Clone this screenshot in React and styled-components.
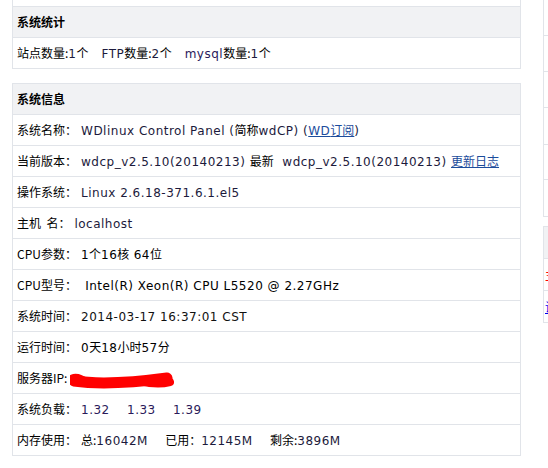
import React from 'react';
import styled, { createGlobalStyle } from 'styled-components';

const GlobalStyle = createGlobalStyle`
  html, body {
    margin: 0;
    padding: 0;
    background: #fff;
    overflow: hidden;
  }
  body {
    font-family: "DejaVu Sans", "Noto Sans CJK SC", sans-serif;
    font-size: 12px;
    color: #000;
  }
`;

const Page = styled.div`
  display: flex;
  align-items: flex-start;
  gap: 22px;
  padding-left: 12px;
  width: 800px;
`;

const Main = styled.div`
  flex: 0 0 509px;
  display: flex;
  flex-direction: column;
  gap: 14px;
`;

const Side = styled.div`
  flex: 0 0 200px;
  display: flex;
  flex-direction: column;
  gap: 9px;
`;

const Table = styled.div`
  border: 1px solid #e1e4e9;
  border-top: ${p => (p.cut ? 'none' : '1px solid #e1e4e9')};
  background: #fff;
  display: flex;
  flex-direction: column;
`;

const Stub = styled.div`
  height: ${p => p.h}px;
  border-bottom: 1px solid #e1e4e9;
`;

const Head = styled.div`
  height: ${p => p.h || 30}px;
  line-height: ${p => p.h || 30}px;
  padding-left: 4px;
  background: #f1f2f4;
  border-bottom: 1px solid #e1e4e9;
  font-family: "Noto Sans CJK SC", "DejaVu Sans", sans-serif;
  font-weight: bold;
  font-size: 12px;
`;

const Row = styled.div`
  height: ${p => p.h || 30}px;
  line-height: ${p => p.h || 30}px;
  padding-left: ${p => p.pad ?? 4}px;
  white-space: pre;
  overflow: hidden;
  border-bottom: 1px solid #e1e4e9;
  &:last-child {
    border-bottom: none;
  }
`;

const Label = styled.span`
  font-family: "Noto Sans CJK SC", "DejaVu Sans", sans-serif;
  letter-spacing: 0;
  color: ${p => p.tone || '#000'};
  margin-right: ${p => (p.gap ? 4 : 0)}px;
`;

const Value = styled.span`
  font-family: "DejaVu Sans", "Noto Sans CJK SC", sans-serif;
  letter-spacing: 0.5px;
  color: ${p => p.tone || '#1c1a3c'};
`;

const Link = styled.a`
  color: ${p => p.tone || '#1c4c9c'};
  text-decoration: underline;
  cursor: pointer;
`;

const Redacted = () => (
  <svg width="104" height="18" viewBox="0 0 104 18" style={{ verticalAlign: 'middle', marginLeft: 3 }}>
    <path d="M4 10 C 25 13, 60 12, 97 7" stroke="#ff0000" strokeWidth="11" strokeLinecap="round" fill="none" />
    <path d="M2 6 C 6 4, 10 6, 14 8" stroke="#ff0000" strokeWidth="5" strokeLinecap="round" fill="none" />
    <path d="M70 10 C 82 13, 92 13, 100 11" stroke="#ff0000" strokeWidth="8" strokeLinecap="round" fill="none" />
  </svg>
);

const info = [
  [<Label key="l" gap>系统名称：</Label>, <Value key="v">WDlinux Control Panel (<Label>简称</Label>wdCP) (<Link>WD<Label tone="inherit">订阅</Label></Link>)</Value>],
  [<Label key="l" gap>当前版本：</Label>, <Value key="v">wdcp_v2.5.10(20140213) <Label>最新</Label>  wdcp_v2.5.10(20140213) <Link><Label tone="inherit">更新日志</Label></Link></Value>],
  [<Label key="l" gap>操作系统：</Label>, <Value key="v">Linux 2.6.18-371.6.1.el5</Value>],
  [<Label key="l" gap>主机  名：</Label>, <Value key="v">localhost</Value>],
  [<Label key="l" gap>CPU参数：</Label>, <Value key="v" tone="#000">1<Label>个</Label>16<Label>核</Label> 64<Label>位</Label></Value>],
  [<Label key="l" gap>CPU型号：</Label>, <Value key="v" tone="#000"> Intel(R) Xeon(R) CPU L5520 @ 2.27GHz</Value>],
  [<Label key="l" gap>系统时间：</Label>, <Value key="v" tone="#111">2014-03-17 16:37:01 CST</Value>],
  [<Label key="l" gap>运行时间：</Label>, <Value key="v" tone="#000">0<Label>天</Label>18<Label>小时</Label>57<Label>分</Label></Value>],
  [<Label key="l">服务器IP:</Label>, <Redacted key="v" />],
  [<Label key="l" gap>系统负载：</Label>, <Value key="v" tone="#2a1a5a">1.32    1.33    1.39</Value>],
  [<Label key="l" gap>内存使用：</Label>, <Value key="v"><Label>总:</Label>16042M    <Label>已用：</Label>12145M    <Label>剩余:</Label>3896M</Value>],
];

export default function App() {
  return (
    <>
      <GlobalStyle />
      <Page>
        <Main>
          <Table cut>
            <Stub h={6} />
            <Head>系统统计</Head>
            <Row>
              <Label>站点数量:</Label><Value>1</Value><Label>个</Label><Value>   FTP</Value><Label>数量:</Label><Value>2</Value><Label>个</Label><Value tone="#2a1a5a">   mysql</Value><Label>数量:</Label><Value>1</Value><Label>个</Label>
            </Row>
          </Table>
          <Table>
            <Head>系统信息</Head>
            {info.map((r, i) => (
              <Row key={i}>{r[0]}{r[1]}</Row>
            ))}
          </Table>
        </Main>
        <Side>
          <Table cut>
            <Row h={35} />
            <Row h={35} />
            <Row h={35} />
            <Row h={36} />
            <Row h={34} />
            <Row h={36} />
          </Table>
          <Table>
            <Head h={31} />
            <Row h={31} pad={1}><Label tone="#ff0000">主机</Label></Row>
            <Row h={31} pad={1}><Link tone="#0000ee"><Label tone="inherit">说明</Label></Link></Row>
          </Table>
        </Side>
      </Page>
    </>
  );
}
